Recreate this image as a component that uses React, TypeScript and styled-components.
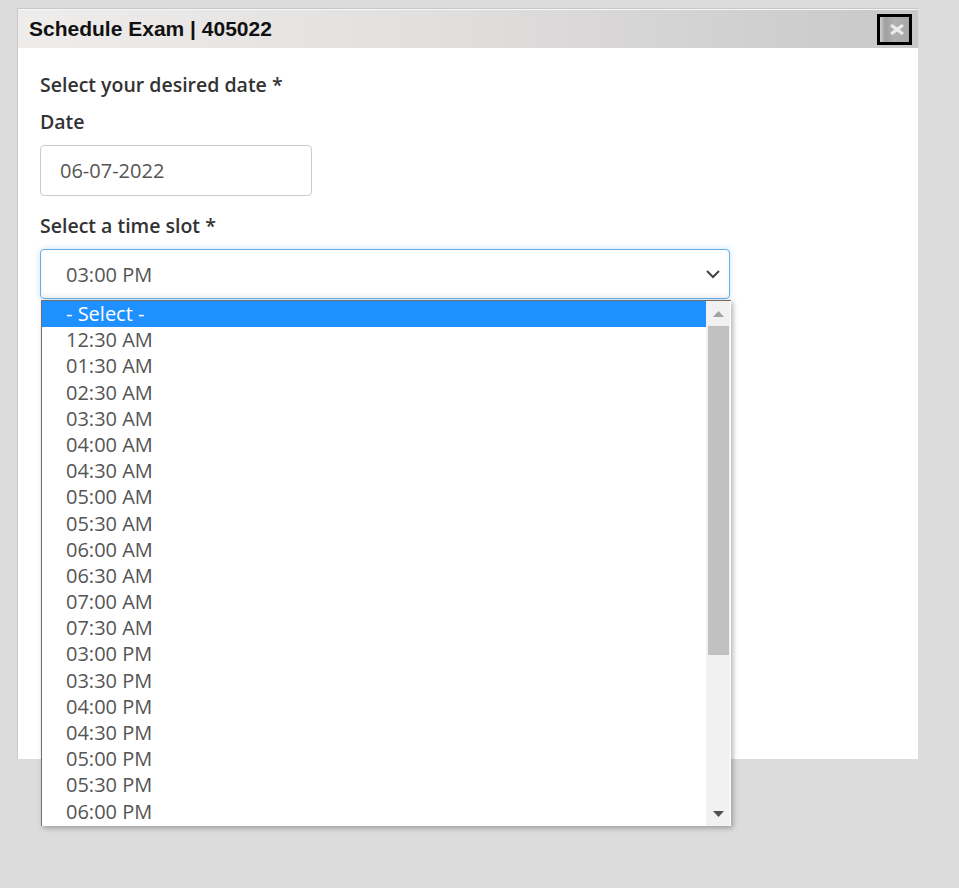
import React from "react";
import styled, { createGlobalStyle } from "styled-components";

const Global = createGlobalStyle`
  html, body { margin: 0; padding: 0; background: #dcdcdc; }
  body { font-family: "Open Sans", "Liberation Sans", sans-serif; }
`;

const Page = styled.div`
  padding: 8px 0 0 17px;
  min-height: 880px;
`;

const Dialog = styled.div`
  width: 900px;
  border-top: 1px solid #c8c8c8;
  border-left: 1px solid #c8c8c8;
  background: #fff;
`;

const TitleBar = styled.div`
  height: 39px;
  border-top: 1px solid #f6f6f6;
  background: linear-gradient(to right, #efedeb 0%, #e2e0df 45%, #c8c8c8 100%);
  display: flex;
  align-items: center;
  justify-content: space-between;
  padding: 0 6px 0 11px;
  box-sizing: border-box;
`;

const Title = styled.div`
  font-family: "Liberation Sans", Arial, sans-serif;
  font-weight: bold;
  font-size: 21px;
  color: #111;
`;

const CloseButton = styled.div`
  width: 35px;
  height: 31px;
  box-sizing: border-box;
  border: 3px solid #000;
  background: linear-gradient(to right, #d0d0d0 0px, #a0a0a0 5px, #b0b0b0 50%, #a6a6a6 100%);
  display: flex;
  align-items: center;
  justify-content: center;
  padding-left: 5px;
`;

const Body = styled.div`
  height: 711px;
  padding: 24px 0 0 22px;
  box-sizing: border-box;
`;

const Label = styled.div<{ $gap: number }>`
  font-size: 19.5px;
  line-height: 26px;
  font-weight: 600;
  color: #333;
  margin-bottom: ${(p) => p.$gap}px;
`;

const DateInput = styled.input`
  display: block;
  width: 272px;
  height: 51px;
  box-sizing: border-box;
  border: 1px solid #ccc;
  border-radius: 4px;
  padding: 0 0 0 19px;
  font-family: "Open Sans", sans-serif;
  font-size: 20px;
  color: #555;
  background: #fff;
  margin-bottom: 17px;
  outline: none;
`;

const SelectWrap = styled.div`
  position: relative;
  width: 690px;
`;

const SelectBox = styled.div`
  height: 50px;
  box-sizing: border-box;
  border: 1px solid #66afe9;
  border-radius: 4px;
  box-shadow: inset 0 -3px 4px rgba(0, 0, 0, 0.06), 0 0 6px rgba(102, 175, 233, 0.35);
  display: flex;
  align-items: center;
  justify-content: space-between;
  padding: 0 8px 0 25px;
  font-size: 20px;
  color: #555;
  background: #fff;
`;

const DropList = styled.div`
  position: absolute;
  top: 51px;
  left: 1px;
  width: 690px;
  height: 526px;
  box-sizing: border-box;
  border-top: 1px solid #6e6e6e;
  border-left: 1px solid #6e6e6e;
  background: #fff;
  box-shadow: 2px 2px 5px rgba(0, 0, 0, 0.3);
  display: flex;
`;

const Options = styled.div`
  flex: 1;
  display: flex;
  flex-direction: column;
`;

const Option = styled.div<{ $active?: boolean }>`
  height: 26.2px;
  line-height: 26px;
  padding-left: 24px;
  font-size: 20px;
  color: ${(p) => (p.$active ? "#fff" : "#555")};
  background: ${(p) => (p.$active ? "#1e90ff" : "transparent")};
`;

const ScrollBar = styled.div`
  width: 24px;
  background: #f1f1f1;
  display: flex;
  flex-direction: column;
  align-items: center;
  margin-right: 1px;
`;

const Arrow = styled.div`
  height: 25px;
  width: 100%;
  display: flex;
  align-items: center;
  justify-content: center;
`;

const Thumb = styled.div`
  width: 21px;
  height: 329px;
  background: #c1c1c1;
`;

const Spacer = styled.div`
  flex: 1;
`;

const times = [
  "12:30 AM", "01:30 AM", "02:30 AM", "03:30 AM", "04:00 AM", "04:30 AM",
  "05:00 AM", "05:30 AM", "06:00 AM", "06:30 AM", "07:00 AM", "07:30 AM",
  "03:00 PM", "03:30 PM", "04:00 PM", "04:30 PM", "05:00 PM", "05:30 PM", "06:00 PM",
];

export default function App() {
  return (
    <>
      <Global />
      <Page>
        <Dialog>
          <TitleBar>
            <Title>Schedule Exam | 405022</Title>
            <CloseButton>
              <svg width="14" height="11" viewBox="0 0 14 11">
                <path d="M2 1.8 L12 9.2 M12 1.8 L2 9.2" stroke="#ececec" strokeWidth="3" strokeLinecap="round" />
              </svg>
            </CloseButton>
          </TitleBar>
          <Body>
            <Label $gap={11}>Select your desired date *</Label>
            <Label $gap={10}>Date</Label>
            <DateInput readOnly value="06-07-2022" />
            <Label $gap={10}>Select a time slot *</Label>
            <SelectWrap>
              <SelectBox>
                <span>03:00 PM</span>
                <svg width="16" height="10" viewBox="0 0 16 10">
                  <path d="M2 2 L8 8 L14 2" fill="none" stroke="#444" strokeWidth="2" />
                </svg>
              </SelectBox>
              <DropList>
                <Options>
                  <Option $active>- Select -</Option>
                  {times.map((t) => (
                    <Option key={t}>{t}</Option>
                  ))}
                </Options>
                <ScrollBar>
                  <Arrow>
                    <svg width="11" height="6" viewBox="0 0 11 6">
                      <path d="M0 6 L5.5 0 L11 6 Z" fill="#a3a3a3" />
                    </svg>
                  </Arrow>
                  <Thumb />
                  <Spacer />
                  <Arrow>
                    <svg width="11" height="6" viewBox="0 0 11 6">
                      <path d="M0 0 L5.5 6 L11 0 Z" fill="#505050" />
                    </svg>
                  </Arrow>
                </ScrollBar>
              </DropList>
            </SelectWrap>
          </Body>
        </Dialog>
      </Page>
    </>
  );
}
